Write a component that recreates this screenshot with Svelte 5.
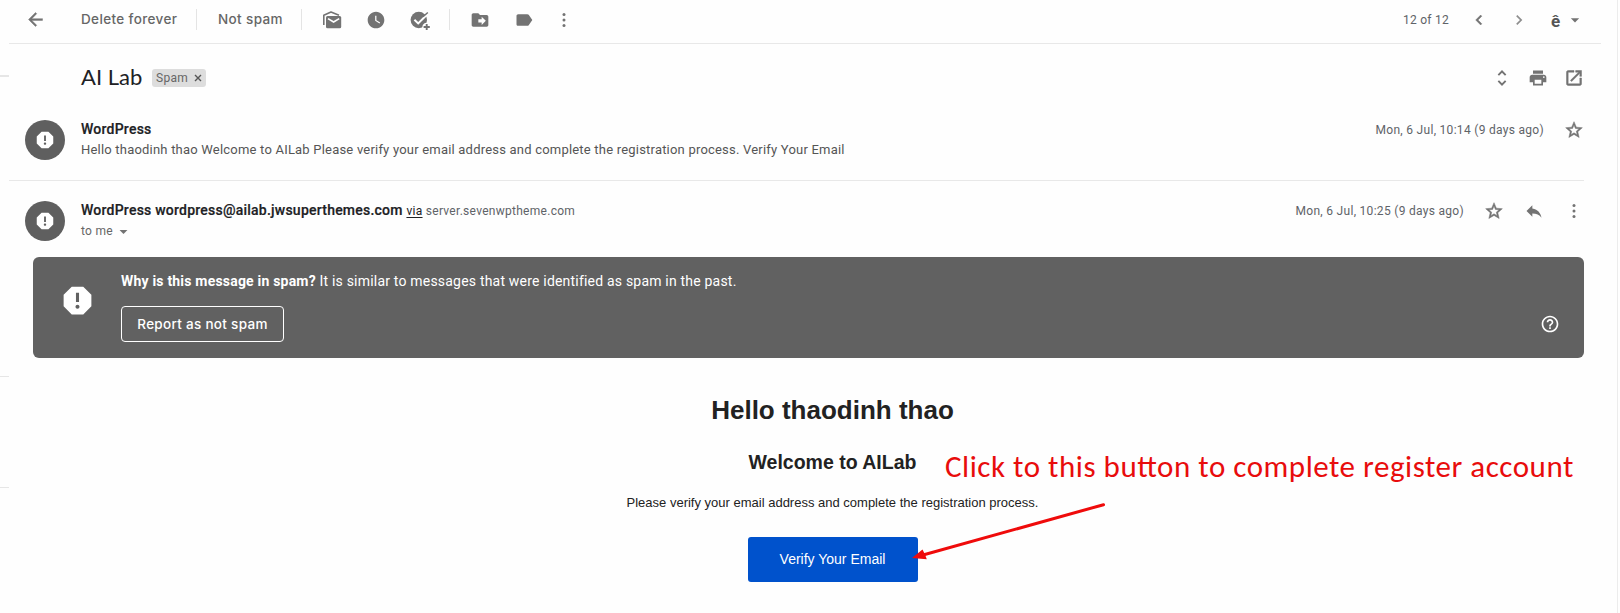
<script>
  const mails = [
    {
      name: 'WordPress',
      preview:
        'Hello thaodinh thao Welcome to AILab Please verify your email address and complete the registration process. Verify Your Email',
      date: 'Mon, 6 Jul, 10:14 (9 days ago)'
    },
    {
      name: 'WordPress wordpress@ailab.jwsuperthemes.com',
      via: 'server.sevenwptheme.com',
      date: 'Mon, 6 Jul, 10:25 (9 days ago)'
    }
  ];
  const paths = {
    back: 'M20 11H7.83l5.59-5.59L12 4l-8 8 8 8 1.41-1.41L7.83 13H20v-2z',
    clock:
      'M12 2C6.5 2 2 6.5 2 12s4.5 10 10 10 10-4.5 10-10S17.5 2 12 2zm4.2 14.2L11 13V7h1.5v5.2l4.5 2.7-.8 1.3z',
    move: 'M20 6h-8l-2-2H4c-1.1 0-1.99.9-1.99 2L2 18c0 1.1.9 2 2 2h16c1.1 0 2-.9 2-2V8c0-1.1-.9-2-2-2zm-6 12v-3h-4v-4h4V8l5 5-5 5z',
    label:
      'M17.63 5.84C17.27 5.33 16.67 5 16 5L5 5.01C3.9 5.01 3 5.9 3 7v10c0 1.1.9 1.99 2 1.99L16 19c.67 0 1.27-.33 1.63-.84L22 12l-4.37-6.16z',
    left: 'M15.41 7.41L14 6l-6 6 6 6 1.41-1.41L10.83 12z',
    right: 'M8.59 16.59L13.17 12 8.59 7.41 10 6l6 6-6 6z',
    drop: 'M7 10l5 5 5-5z',
    unfold:
      'M12 5.03L15.97 9l1.81-1.8L12 1.4 6.2 7.2 8 9l4-3.97zm0 13.94L8.03 15 6.2 16.8 12 22.6l5.78-5.8L15.97 15 12 18.97z',
    print:
      'M19 8H5c-1.66 0-3 1.34-3 3v6h4v4h12v-4h4v-6c0-1.66-1.34-3-3-3zm-3 11H8v-5h8v5zm3-7c-.55 0-1-.45-1-1s.45-1 1-1 1 .45 1 1-.45 1-1 1zm-1-9H6v4h12V3z',
    open: 'M19 19H5V5h7V3H5c-1.11 0-2 .9-2 2v14c0 1.1.89 2 2 2h14c1.1 0 2-.9 2-2v-7h-2v7zM14 3v2h3.59l-9.83 9.83 1.41 1.41L19 6.41V10h2V3h-7z',
    star: 'M22 9.24l-7.19-.62L12 2 9.19 8.63 2 9.24l5.46 4.73L5.82 21 12 17.27 18.18 21l-1.63-7.03L22 9.24zM12 15.4l-3.76 2.27 1-4.28-3.32-2.88 4.38-.38L12 6.1l1.71 4.04 4.38.38-3.32 2.88 1 4.28L12 15.4z',
    reply: 'M10 9V5l-7 7 7 7v-4.1c5 0 8.5 1.6 11 5.1-1-5-4-10-11-11z',
    report:
      'M15.73 3H8.27L3 8.27v7.46L8.27 21h7.46L21 15.73V8.27L15.73 3zM12 17.3c-.72 0-1.3-.58-1.3-1.3 0-.72.58-1.3 1.3-1.3.72 0 1.3.58 1.3 1.3 0 .72-.58 1.3-1.3 1.3zm1-4.3h-2V7h2v6z',
    help: 'M11 18h2v-2h-2v2zm1-16C6.48 2 2 6.48 2 12s4.48 10 10 10 10-4.48 10-10S17.52 2 12 2zm0 18c-4.41 0-8-3.59-8-8s3.59-8 8-8 8 3.59 8 8-3.59 8-8 8zm0-14c-2.21 0-4 1.79-4 4h2c0-1.1.9-2 2-2s2 .9 2 2c0 2-3 1.75-3 5h2c0-2.25 3-2.5 3-5 0-2.21-1.79-4-4-4z'
  };
</script>

{#snippet icon(name, size = 20)}
  <svg class={name} width={size} height={size} viewBox="0 0 24 24"><path d={paths[name]} /></svg>
{/snippet}

{#snippet dots()}
  <svg width="20" height="20" viewBox="0 0 20 20">
    <circle cx="10" cy="4.5" r="1.5" /><circle cx="10" cy="10" r="1.5" /><circle cx="10" cy="15.5" r="1.5" />
  </svg>
{/snippet}

<div class="page">
  <aside class="rail"><i></i><i></i><i></i></aside>

  <main>
    <header class="toolbar">
      <span class="leave">{@render icon('back', 21)}</span>
      <span class="action delete">Delete forever</span>
      <i class="sep"></i>
      <span class="action not">Not spam</span>
      <i class="sep"></i>
      <div class="group first">
        <svg width="20" height="20" viewBox="0 0 20 20">
          <path d="M1.8 15V5.2L9 2.1L17 5.3" fill="none" stroke="#737373" stroke-width="1.6" stroke-linejoin="round" />
          <rect x="4" y="6" width="15.2" height="12.2" rx="1.5" />
          <path d="M6 8.6L11.6 12L17.2 8.6" fill="none" stroke="#fff" stroke-width="1.6" />
        </svg>
        {@render icon('clock')}
        <svg width="20" height="20" viewBox="0 0 20 20" overflow="visible">
          <circle cx="8.8" cy="10" r="8.2" />
          <path d="M4.4 9.8L8.2 13.4L17.6 4" fill="none" stroke="#fff" stroke-width="2" />
          <path d="M13 6.8L17.8 2.5" fill="none" stroke="#737373" stroke-width="1.5" />
          <circle cx="16.6" cy="17" r="4.2" fill="#fff" />
          <path d="M16.7 13.9V20.1M13.6 17H19.8" stroke="#737373" stroke-width="1.9" />
        </svg>
      </div>
      <i class="sep"></i>
      <div class="group second">
        {@render icon('move')}
        {@render icon('label')}
        {@render dots()}
      </div>
      <div class="pager">
        <span class="count">12 of 12</span>
        <span>{@render icon('left', 20)}</span>
        <span class="next">{@render icon('right', 20)}</span>
        <span class="ime">ê</span>
        <span>{@render icon('drop', 20)}</span>
      </div>
    </header>

    <section class="subject">
      <h1>AI Lab</h1>
      <span class="chip">Spam
        <svg width="8" height="8" viewBox="0 0 8 8"><path d="M1 1L7 7M7 1L1 7" stroke="#555" stroke-width="1.4" /></svg>
      </span>
      <div class="tools">
        {@render icon('unfold', 18)}
        {@render icon('print')}
        {@render icon('open')}
      </div>
    </section>

    {#each mails as mail}
      <article class="mail">
        <div class="avatar">{@render icon('report', 22)}</div>
        <div class="who">
          <div class="line">
            <b>{mail.name}</b>
            {#if mail.via}<span class="via"><u>via</u> {mail.via}</span>{/if}
          </div>
          {#if mail.preview}
            <div class="preview">{mail.preview}</div>
          {:else}
            <div class="to">to me {@render icon('drop', 19)}</div>
          {/if}
        </div>
        <div class="meta">
          <span>{mail.date}</span>
          {@render icon('star')}
          {#if mail.via}
            {@render icon('reply')}
            {@render dots()}
          {/if}
        </div>
      </article>
    {/each}

    <section class="banner">
      <div class="warn">{@render icon('report', 37)}</div>
      <div class="reason">
        <p><b>Why is this message in spam?</b> It is similar to messages that were identified as spam in the past.</p>
        <button>Report as not spam</button>
      </div>
      <div class="hint">{@render icon('help')}</div>
    </section>

    <section class="letter">
      <h2>Hello thaodinh thao</h2>
      <h3>Welcome to AILab</h3>
      <p>Please verify your email address and complete the registration process.</p>
      <div class="verify">Verify Your Email</div>
    </section>
  </main>

  <div class="note">Click to this button to complete register account</div>
  <svg class="arrow" width="200" height="70" viewBox="0 0 200 70">
    <path d="M191.5 9.7L11 60" stroke="#ef0b0b" stroke-width="3" stroke-linecap="round" />
    <path d="M0 63L10.5 54.5L13 59.5L14.8 64.3Z" fill="#ef0b0b" />
  </svg>
</div>

<style>
  :global(body) { background: #fff; }
  .page {
    position: relative;
    display: flex;
    width: 1620px;
    height: 613px;
    overflow: hidden;
    box-sizing: border-box;
    background: #fefefe;
    font-family: Roboto, "Liberation Sans", sans-serif;
    color: #202124;
  }
  svg { display: block; flex: none; fill: #737373; }
  .star, .open { stroke: #737373; stroke-width: 0.6; }
  .back, .left { stroke: #737373; stroke-width: 0.5; }
  h1, h2, h3, p { margin: 0; }

  .rail { width: 9px; flex: none; }
  .rail i { display: block; height: 1px; background: #e6e6e6; }
  .rail i:nth-child(1) { height: 2px; margin-top: 75px; }
  .rail i:nth-child(2) { margin-top: 299px; }
  .rail i:nth-child(3) { margin-top: 110px; }

  main {
    width: 1609px;
    flex: none;
    box-sizing: border-box;
    border-right: 1px solid #ececec;
  }

  .toolbar {
    display: flex;
    align-items: center;
    width: 1592px;
    height: 44px;
    box-sizing: border-box;
    padding: 0 0 4px 16px;
    border-bottom: 1px solid #e8e8e8;
  }
  .leave { width: 56px; }
  .action {
    font: 500 13.5px/20px Inter, sans-serif;
    letter-spacing: 0.37px;
    color: #666;
    white-space: nowrap;
    padding-bottom: 1px;
  }
  .delete { width: 115px; }
  .not { width: 84px; margin-left: 21px; margin-right: -1px; }
  .sep { width: 1px; height: 21px; background: #e4e4e4; }
  .group { display: flex; gap: 24px; }
  .first { margin-left: 20px; width: 127px; }
  .second { margin-left: 20px; }
  .second svg:nth-child(3) { margin-left: -4px; }
  .pager { display: flex; align-items: center; margin-left: auto; padding-right: 16px; }
  .count { font-size: 12px; letter-spacing: 0.25px; color: #5f6368; margin-right: 20px; }
  .next { margin-left: 20px; opacity: 0.8; }
  .ime { font: 700 17px/20px Roboto, sans-serif; color: #555; width: 11px; margin: 2px 3px 0 22px; }

  .subject {
    display: flex;
    align-items: center;
    height: 68px;
    width: 1575px;
    box-sizing: border-box;
    padding-left: 72px;
  }
  h1 { font: 400 22px/28px Lato, sans-serif; width: 71px; white-space: nowrap; padding-bottom: 2px; }
  .chip {
    display: flex;
    align-items: center;
    gap: 6px;
    box-sizing: border-box;
    width: 54px;
    height: 18px;
    padding-left: 4px;
    border-radius: 3px;
    background: #ddd;
    color: #666;
    font-size: 12px;
    letter-spacing: 0.3px;
  }
  .tools { display: flex; align-items: center; gap: 16px; margin-left: auto; }
  .tools svg:first-child { margin-right: 1px; }

  .mail {
    display: flex;
    box-sizing: border-box;
    width: 1575px;
    padding: 8px 0 0 16px;
    height: 69px;
    border-bottom: 1px solid #e8e8e8;
  }
  .mail + .mail { height: 76px; padding-top: 20px; border: 0; }
  .avatar {
    display: flex;
    align-items: center;
    justify-content: center;
    width: 40px;
    height: 40px;
    border-radius: 50%;
    background: #5f5f5f;
  }
  .avatar svg { width: 22px; height: 22px; fill: #fff; }
  .who { margin-left: 16px; white-space: nowrap; }
  .line { font-size: 14px; line-height: 18px; height: 20px; letter-spacing: 0.23px; }
  .line b { font-weight: 500; -webkit-text-stroke: 0.2px #202124; }
  .via { font-size: 12px; letter-spacing: 0.28px; color: #5f6368; }
  .via u { color: #202124; text-underline-offset: 2px; }
  .preview { font-size: 13px; line-height: 20px; letter-spacing: 0.205px; color: #555; }
  .to { display: flex; align-items: center; font-size: 12px; line-height: 20px; letter-spacing: 0.3px; color: #666; }
  .to svg { margin-left: 1px; }
  .meta {
    display: flex;
    align-items: center;
    gap: 20px;
    height: 20px;
    margin-left: auto;
    font-size: 12px;
    letter-spacing: 0.3px;
    color: #5f6368;
    white-space: nowrap;
  }

  .banner {
    display: flex;
    box-sizing: border-box;
    width: 1551px;
    height: 101px;
    margin-left: 24px;
    border-radius: 6px;
    background: #616161;
    color: #fff;
  }
  .banner svg { fill: #fff; }
  .warn { padding: 25px 25.5px 0 25.5px; }
  .reason { width: 700px; padding-top: 14px; white-space: nowrap; }
  .reason p { font-size: 14px; line-height: 20px; letter-spacing: 0.2px; }
  .reason b { font-weight: 700; }
  .reason button {
    display: block;
    width: 163px;
    height: 36px;
    margin-top: 15px;
    padding: 0;
    border: 1px solid #fff;
    border-radius: 4px;
    background: none;
    color: #fff;
    font: 500 13.5px/20px Inter, sans-serif;
    letter-spacing: 0.3px;
  }
  .hint { margin: 57px 24px 0 auto; }

  .letter {
    display: flex;
    flex-direction: column;
    align-items: center;
    width: 1647px;
    padding-top: 37px;
    font-family: "Liberation Sans", Arial, sans-serif;
    color: #222;
  }
  .letter h2 { font-size: 26px; line-height: 30px; }
  .letter h3 { font-size: 19.5px; line-height: 24px; margin-top: 25px; }
  .letter p { font-size: 13px; line-height: 20px; margin-top: 19px; }
  .verify {
    width: 170px;
    height: 45px;
    margin-top: 24px;
    border-radius: 3px;
    background: #0052cc;
    color: #fff;
    font-size: 14px;
    line-height: 45px;
    text-align: center;
  }

  .note {
    position: absolute;
    left: 945px;
    top: 446px;
    font: 400 31px/40px Carlito, Calibri, Lato, sans-serif;
    letter-spacing: 0.52px;
    font-feature-settings: "liga" 1;
    color: #e80c0c;
    white-space: nowrap;
  }
  .arrow { position: absolute; left: 912px; top: 495px; }
</style>
